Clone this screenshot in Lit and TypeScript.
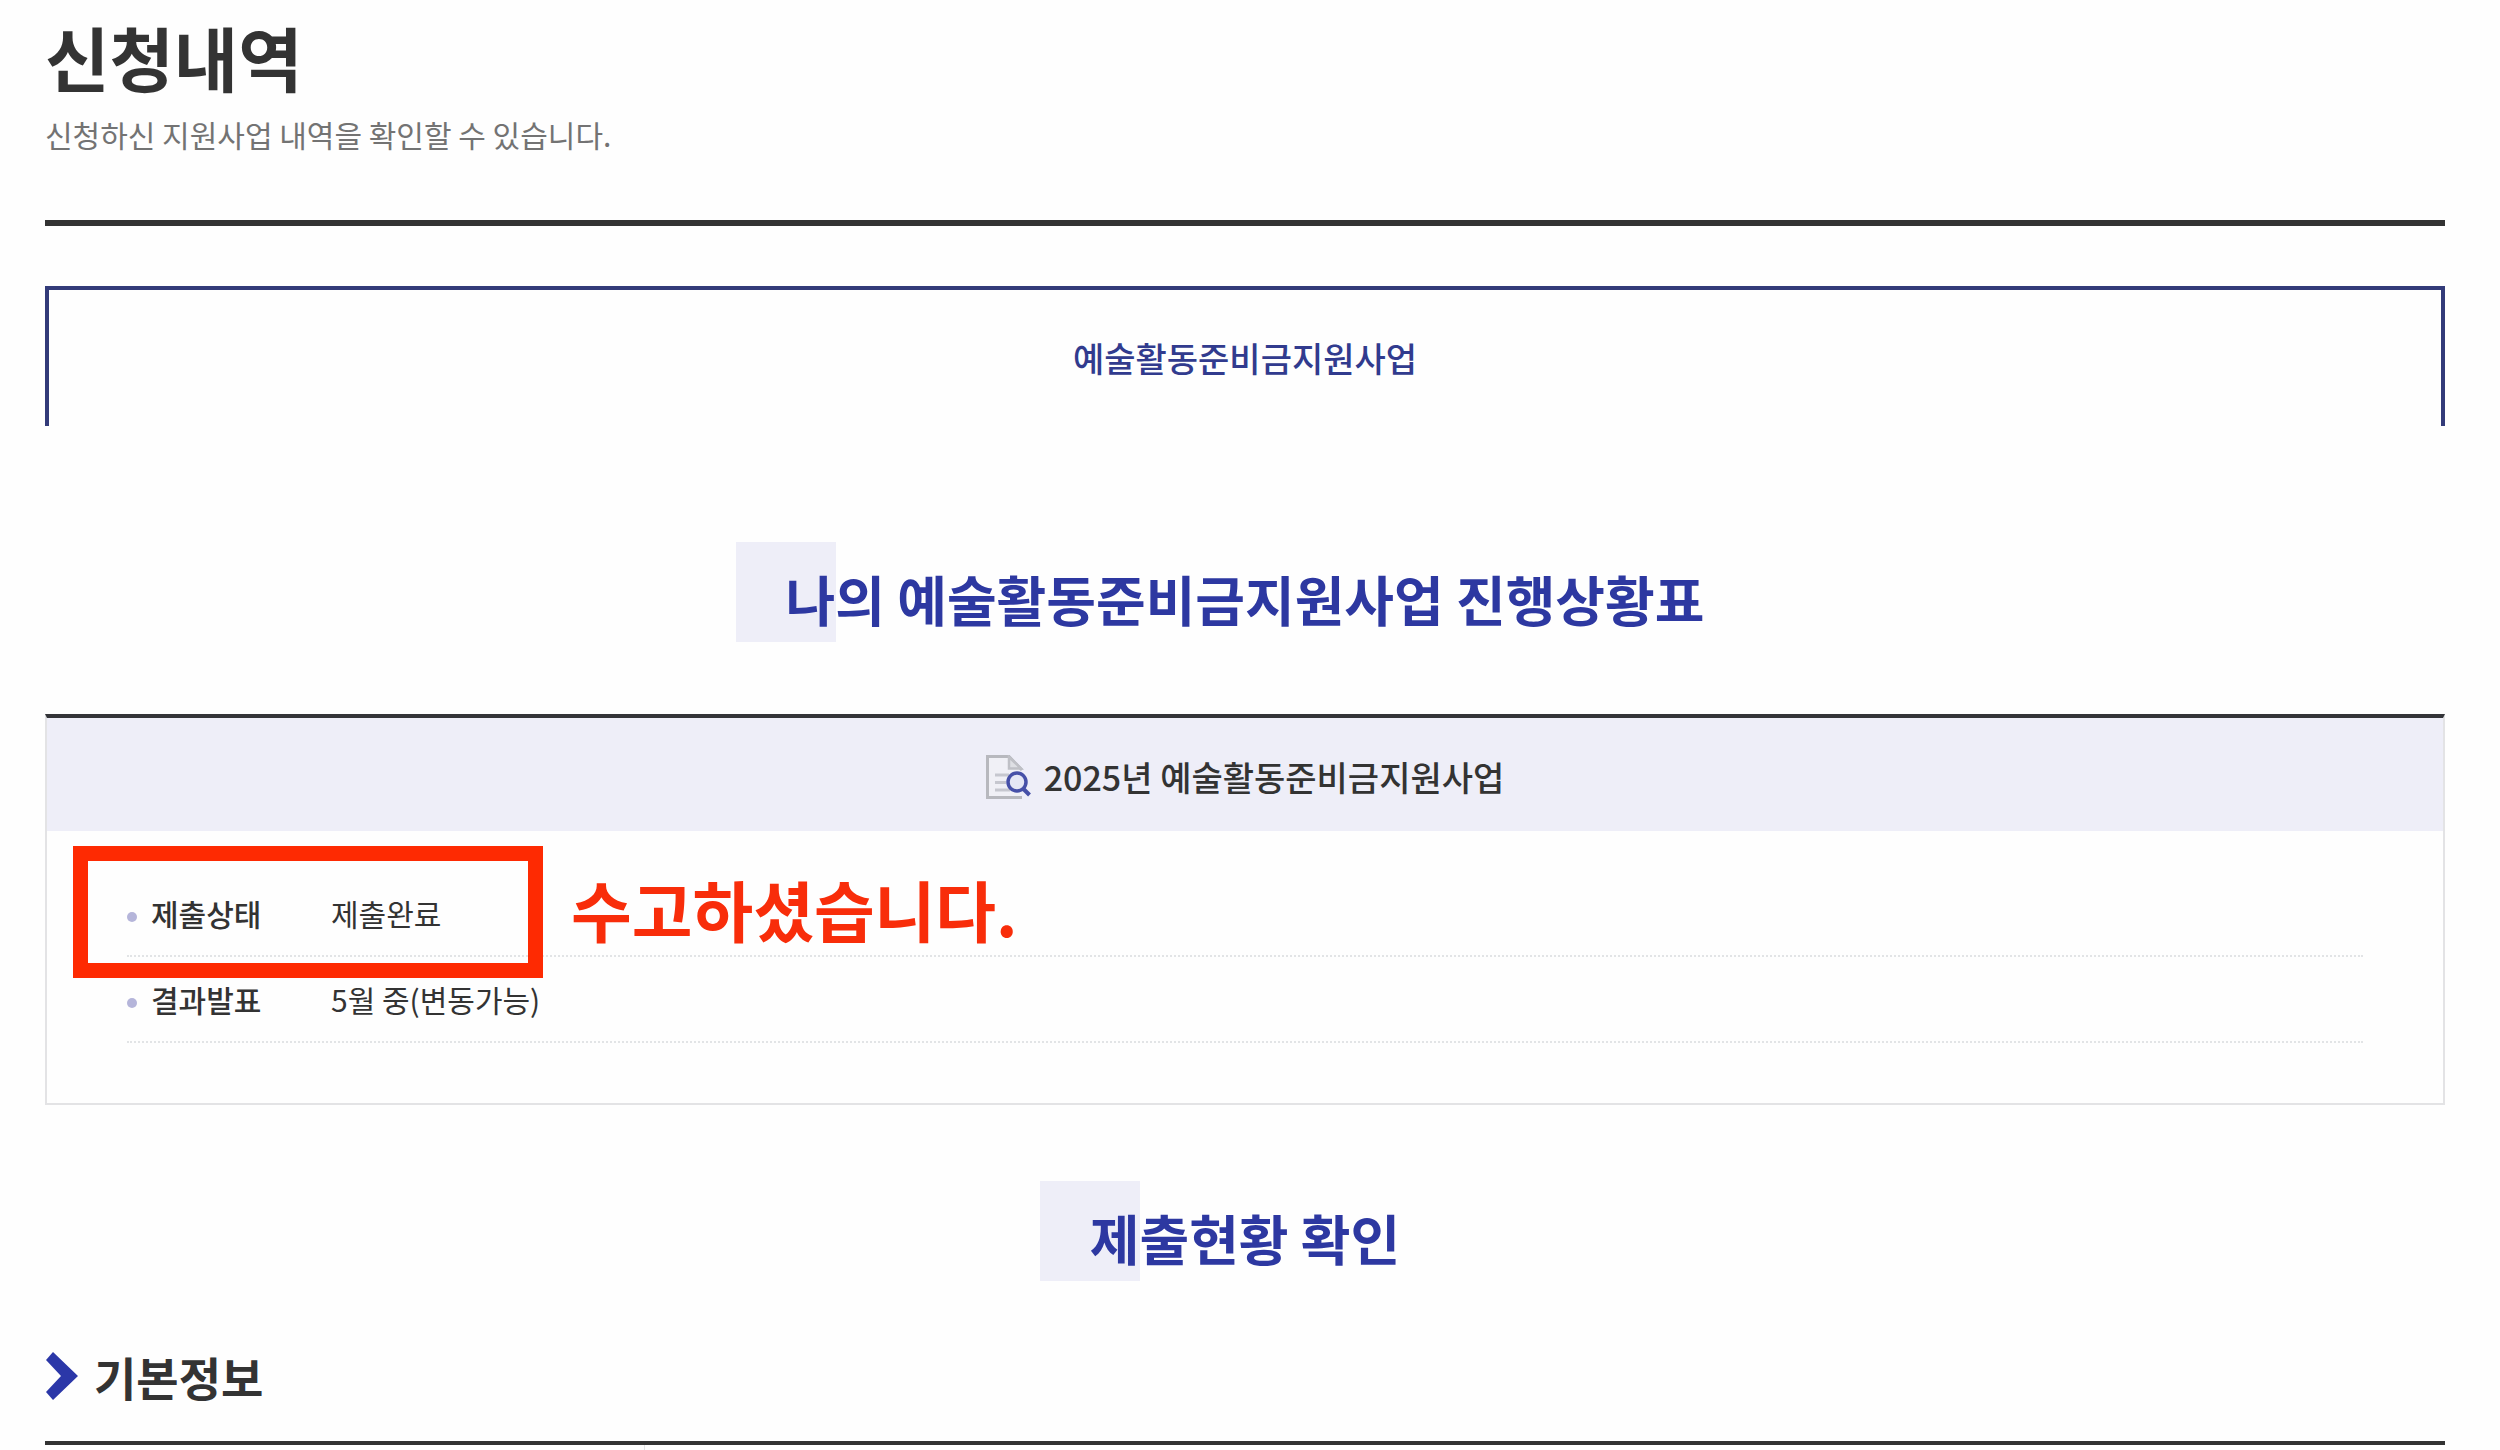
import { LitElement, html, css, svg } from "lit";
import { customElement } from "lit/decorators.js";

interface StatusRow {
  label: string;
  value: string;
  note?: string;
}

const rows: StatusRow[] = [
  { label: "제출상태", value: "제출완료", note: "수고하셨습니다." },
  { label: "결과발표", value: "5월 중(변동가능)" },
];

const documentIcon = svg`
  <svg class="doc-icon" viewBox="0 0 46 44" aria-hidden="true">
    <path d="M1.5 1.5H23L35 14V42.5H1.5Z" fill="#f0f0f6"/>
    <path d="M36 42.5H1.5V1.5H23L36 15" fill="none" stroke="#b7b8be" stroke-width="3"/>
    <path d="M23 2V13.500H35Z" fill="#dedfe4" stroke="#bfc0c6" stroke-width="2.500"/>
    <path d="M9 20H23M9 27.500H20M9 35H24" stroke="#c6c7cf" stroke-width="3"/>
    <circle cx="31" cy="27" r="9" fill="#e4e6f5" stroke="#4650a8" stroke-width="3.500"/>
    <path d="M37 33.500L43.500 40" stroke="#4650a8" stroke-width="4"/>
  </svg>`;

@customElement("app-root")
export class AppRoot extends LitElement {
  static styles = css`
    :host {
      display: block;
      padding: 21px 55px 0 45px;
      background: #fefefe;
      color: #333;
      font-family: "Noto Sans CJK KR", sans-serif;
      font-size: 30px;
      line-height: 40px;
    }
    h1, h2, h3, p, dl, dd {
      margin: 0;
    }
    .page-head {
      padding-bottom: 66px;
      border-bottom: 6px solid #333;
    }
    .title {
      font-size: 70px;
      line-height: 72px;
      font-weight: 700;
    }
    .lead {
      margin-top: 21px;
      color: #737373;
    }
    .tab {
      display: flex;
      align-items: center;
      justify-content: center;
      height: 136px;
      margin-top: 60px;
      border: 4px solid #333b79;
      border-bottom: 0;
      color: #313b8e;
      font-size: 34px;
      font-weight: 500;
      text-decoration: none;
    }
    .section-title {
      display: flex;
      justify-content: center;
      font-size: 54px;
      line-height: 86px;
      font-weight: 700;
      color: #2d38a1;
    }
    .section-title span {
      position: relative;
      z-index: 0;
      padding-top: 14px;
    }
    .section-title span::before {
      content: "";
      position: absolute;
      z-index: -1;
      top: 0;
      left: -50px;
      width: 100px;
      height: 100px;
      background: #eeeef8;
    }
    .progress-title {
      margin: 116px 0 72px;
    }
    .check-title {
      margin: 76px 0 66px;
    }
    .panel {
      border: 2px solid #e3e3e5;
      border-top: 4px solid #333438;
    }
    .panel-head {
      display: flex;
      align-items: center;
      justify-content: center;
      gap: 12px;
      height: 109px;
      padding-top: 4px;
      background: #eeeef8;
      font-size: 34px;
      font-weight: 500;
    }
    .doc-icon {
      width: 46px;
      height: 44px;
    }
    .rows {
      padding: 40px 80px 60px;
    }
    .row {
      position: relative;
      display: flex;
      align-items: center;
      height: 84px;
      border-bottom: 2px dotted #e2e4e6;
    }
    .row dt {
      display: flex;
      align-items: center;
      gap: 14px;
      width: 204px;
      font-weight: 500;
    }
    .row dt::before {
      content: "";
      width: 10px;
      height: 10px;
      margin-top: 8px;
      border-radius: 50%;
      background: #b5b5da;
    }
    .mark {
      position: absolute;
      top: -25px;
      left: -54px;
      box-sizing: border-box;
      width: 470px;
      height: 132px;
      border: 15px solid #fe2a02;
    }
    .note {
      position: absolute;
      left: 444px;
      top: 0;
      font-size: 66px;
      line-height: 74px;
      font-weight: 700;
      color: #f82d0a;
      white-space: nowrap;
    }
    .info-title {
      display: flex;
      align-items: center;
      gap: 16px;
      padding-bottom: 36px;
      border-bottom: 4px solid #333;
      font-size: 46px;
      line-height: 58px;
      font-weight: 700;
    }
    .chevron {
      width: 33px;
      height: 48px;
    }
    .info-body {
      display: grid;
      grid-template-columns: 1fr 3fr;
      height: 5px;
    }
    .info-body div {
      border-right: 1px solid #e3e3e5;
    }
  `;

  private renderRow(row: StatusRow) {
    return html`
      <div class="row">
        <dt>${row.label}</dt>
        <dd>${row.value}</dd>
        ${row.note
          ? html`<dd class="note">${row.note}</dd><dd class="mark" aria-hidden="true"></dd>`
          : null}
      </div>`;
  }

  render() {
    return html`
      <header class="page-head">
        <h1 class="title">신청내역</h1>
        <p class="lead">신청하신 지원사업 내역을 확인할 수 있습니다.</p>
      </header>
      <nav><a class="tab" href="#progress">예술활동준비금지원사업</a></nav>
      <main>
        <h2 class="section-title progress-title" id="progress">
          <span>나의 예술활동준비금지원사업 진행상황표</span>
        </h2>
        <section class="panel">
          <h3 class="panel-head">${documentIcon}<span>2025년 예술활동준비금지원사업</span></h3>
          <dl class="rows">${rows.map((row) => this.renderRow(row))}</dl>
        </section>
        <h2 class="section-title check-title"><span>제출현황 확인</span></h2>
        <h3 class="info-title">
          <svg class="chevron" viewBox="0 0 33 48" aria-hidden="true">
            <path d="M1 8L8 0L33 24L8 48L1 40L16 24Z" fill="#2b37a8"/>
          </svg>
          <span>기본정보</span>
        </h3>
        <div class="info-body"><div></div></div>
      </main>
    `;
  }
}
